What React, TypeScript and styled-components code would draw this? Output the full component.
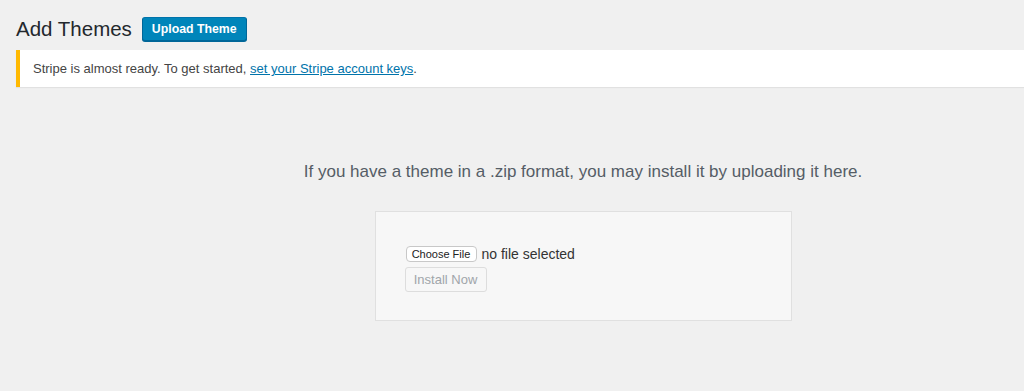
import React from "react";
import styled, { createGlobalStyle } from "styled-components";

const Global = createGlobalStyle`
  html, body {
    margin: 0;
    padding: 0;
    background: #f0f0f0;
    overflow: hidden;
  }
  body {
    font-family: "Liberation Sans", Arial, sans-serif;
    color: #444;
    width: 1024px;
    height: 391px;
  }
`;

const Wrap = styled.div`
  padding: 17px 0 0 16px;
`;

const Header = styled.div`
  display: flex;
  align-items: center;
  gap: 10px;
  height: 24px;
`;

const Title = styled.h1`
  margin: 0;
  font-size: 20.5px;
  font-weight: 400;
  color: #23282d;
  line-height: 24px;
`;

const PrimaryButton = styled.button`
  height: 24px;
  padding: 0 9px;
  background: #0085ba;
  border: 1px solid #0073aa;
  border-color: #0073aa #006799 #006799;
  border-radius: 3px;
  color: #fff;
  font-family: "Liberation Sans", Arial, sans-serif;
  font-size: 12.3px;
  font-weight: 700;
  line-height: 22px;
  box-shadow: 0 1px 0 #006799;
`;

const Notice = styled.div`
  margin-top: 9px;
  height: 37px;
  display: flex;
  align-items: center;
  background: #fff;
  border-left: 4px solid #ffb900;
  padding-left: 13px;
  font-size: 13px;
  color: #444;
  box-shadow: 0 1px 1px rgba(0, 0, 0, 0.06);
`;

const Link = styled.a`
  color: #0073aa;
  text-decoration: underline;
`;

const Upload = styled.div`
  display: flex;
  flex-direction: column;
  align-items: center;
  padding-left: 126px;
`;

const Help = styled.p`
  margin: 75px 0 0;
  font-size: 17px;
  color: #555d66;
  line-height: 20px;
  text-align: center;
  white-space: nowrap;
`;

const Box = styled.form`
  margin-top: 29px;
  width: 417px;
  height: 110px;
  background: #f7f7f7;
  border: 1px solid #e0e0e0;
  padding: 34px 0 0 30px;
  box-sizing: border-box;
  display: flex;
  flex-direction: column;
  align-items: flex-start;
  gap: 5px;
`;

const FileRow = styled.div`
  display: flex;
  align-items: center;
  gap: 5px;
  height: 16px;
`;

const FileButton = styled.span`
  display: inline-flex;
  align-items: center;
  justify-content: center;
  width: 71px;
  height: 16px;
  box-sizing: border-box;
  background: #fff;
  border: 1px solid #c8c8c8;
  border-radius: 4px;
  font-size: 11px;
  color: #222;
`;

const FileLabel = styled.span`
  font-size: 14px;
  color: #333;
`;

const SecondaryButton = styled.button`
  width: 82px;
  height: 25px;
  margin-left: -1px;
  background: #f7f7f7;
  border: 1px solid #ddd;
  border-radius: 3px;
  color: #a0a5aa;
  font-family: "Liberation Sans", Arial, sans-serif;
  font-size: 13px;
  padding: 0;
`;

export default function App() {
  return (
    <>
      <Global />
      <Wrap>
        <Header>
          <Title>Add Themes</Title>
          <PrimaryButton>Upload Theme</PrimaryButton>
        </Header>
        <Notice>
          <span>
            Stripe is almost ready. To get started,{" "}
            <Link href="#">set your Stripe account keys</Link>.
          </span>
        </Notice>
        <Upload>
          <Help>If you have a theme in a .zip format, you may install it by uploading it here.</Help>
          <Box>
            <FileRow>
              <FileButton>Choose File</FileButton>
              <FileLabel>no file selected</FileLabel>
            </FileRow>
            <SecondaryButton type="button" disabled>
              Install Now
            </SecondaryButton>
          </Box>
        </Upload>
      </Wrap>
    </>
  );
}
